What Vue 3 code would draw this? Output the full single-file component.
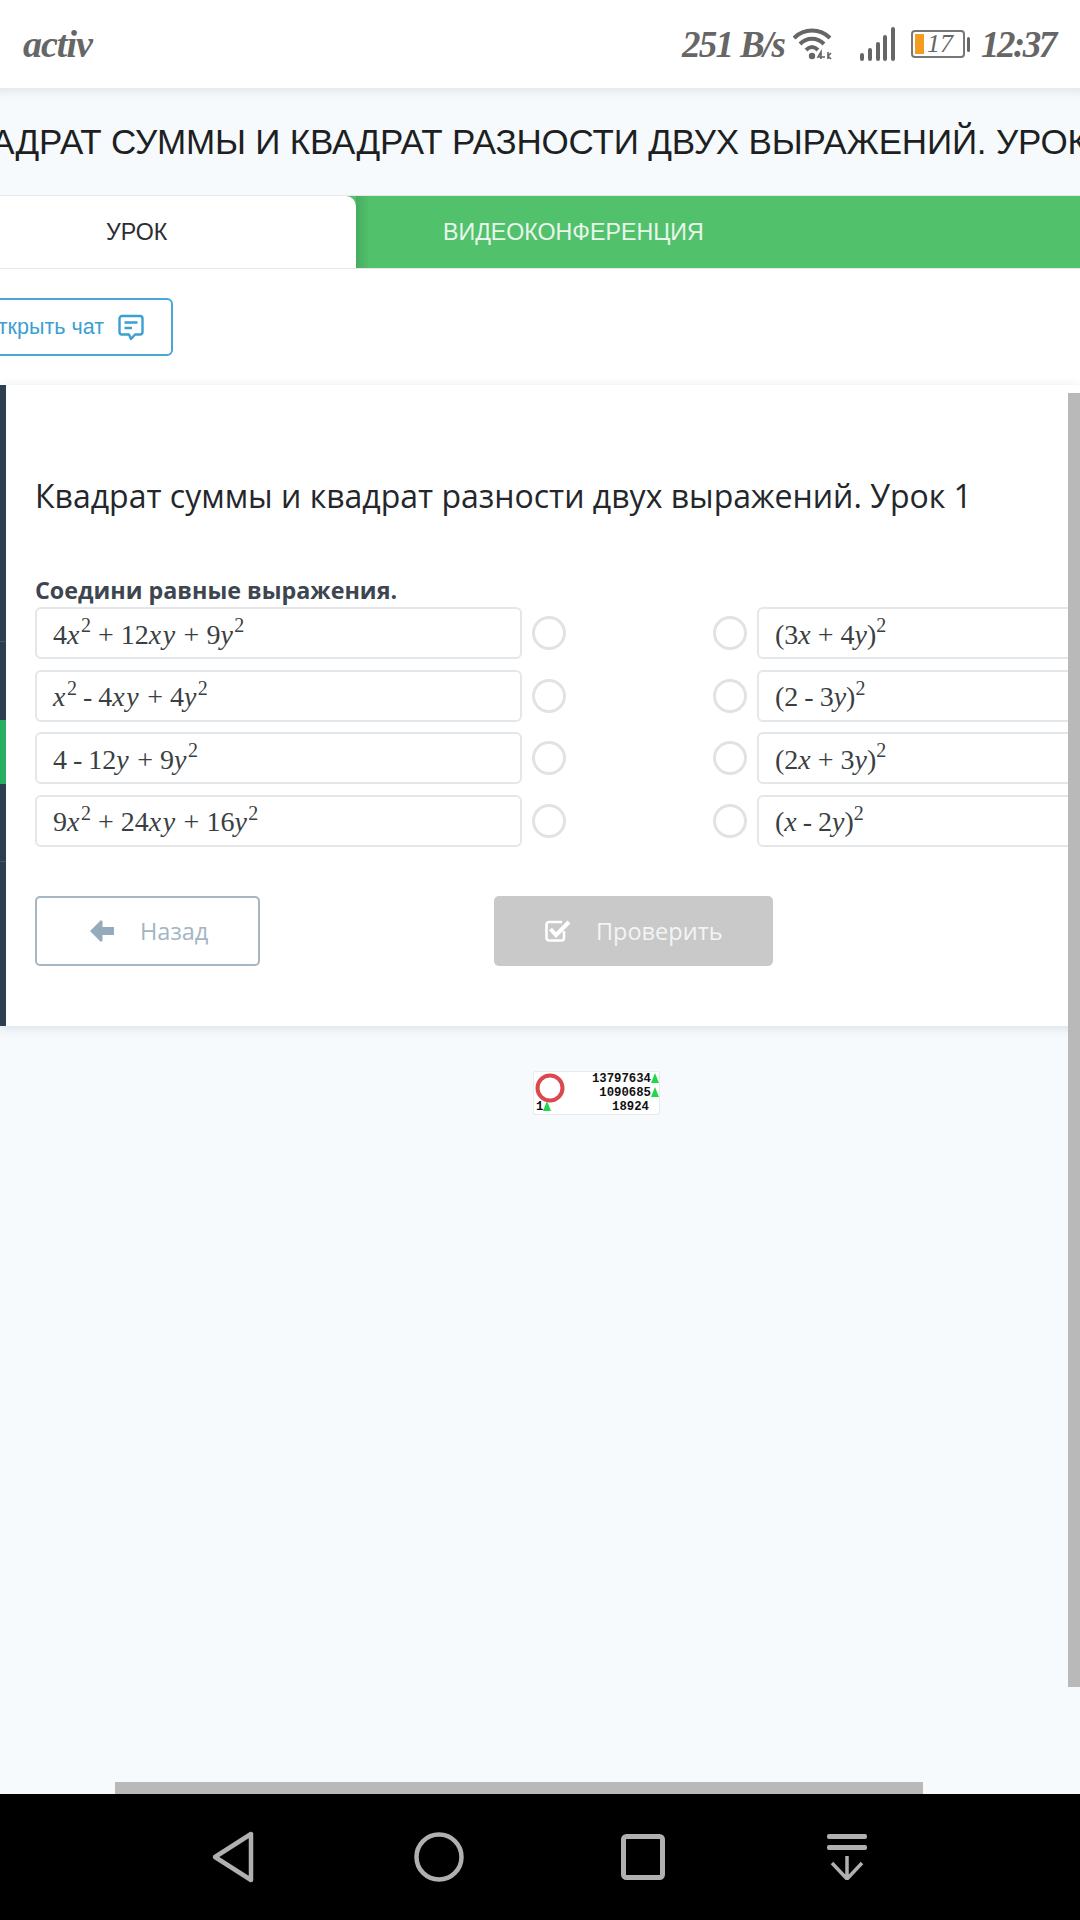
<script setup>
const leftRows = [
  [['n', '4'], ['i', 'x'], ['s', '2'], ['o', '+'], ['n', '12'], ['i', 'xy'], ['o', '+'], ['n', '9'], ['i', 'y'], ['s', '2']],
  [['i', 'x'], ['s', '2'], ['m', '-'], ['n', '4'], ['i', 'xy'], ['o', '+'], ['n', '4'], ['i', 'y'], ['s', '2']],
  [['n', '4'], ['m', '-'], ['n', '12'], ['i', 'y'], ['o', '+'], ['n', '9'], ['i', 'y'], ['s', '2']],
  [['n', '9'], ['i', 'x'], ['s', '2'], ['o', '+'], ['n', '24'], ['i', 'xy'], ['o', '+'], ['n', '16'], ['i', 'y'], ['s', '2']]
]
const rightRows = [
  [['n', '(3'], ['i', 'x'], ['o', '+'], ['n', '4'], ['i', 'y'], ['n', ')'], ['s', '2']],
  [['n', '(2'], ['m', '-'], ['n', '3'], ['i', 'y'], ['n', ')'], ['s', '2']],
  [['n', '(2'], ['i', 'x'], ['o', '+'], ['n', '3'], ['i', 'y'], ['n', ')'], ['s', '2']],
  [['n', '('], ['i', 'x'], ['m', '-'], ['n', '2'], ['i', 'y'], ['n', ')'], ['s', '2']]
]
const rows = leftRows.map((left, i) => ({ left, right: rightRows[i] }))
</script>

<template>
  <div class="screen">
    <header class="status">
      <span class="carrier">activ</span>
      <div class="status-right">
        <span class="speed">251 B/s</span>
        <svg class="wifi" width="40" height="34" viewBox="0 0 40 34">
          <path d="M1 11 C11 1 27 1 37 11" fill="none" stroke="#666" stroke-width="4"/>
          <path d="M7 17 C14 10 24 10 31 17" fill="none" stroke="#666" stroke-width="4"/>
          <path d="M13 23 C17 19 21 19 25 23" fill="none" stroke="#666" stroke-width="4"/>
          <circle cx="19" cy="29" r="3.2" fill="#666"/>
          <path d="M28 32 V25 L25 30 H32 M35 25 V32 M35 29 L38 26 M35 29 L38 32" fill="none" stroke="#666" stroke-width="1.6"/>
        </svg>
        <svg class="signal" width="35" height="34" viewBox="0 0 35 34">
          <rect x="0" y="26" width="4" height="8" rx="2" fill="#666"/>
          <rect x="8" y="21" width="4" height="13" rx="2" fill="#666"/>
          <rect x="16" y="15" width="4" height="19" rx="2" fill="#666"/>
          <rect x="23" y="8" width="4" height="26" rx="2" fill="#666"/>
          <rect x="31" y="0" width="4" height="34" rx="2" fill="#666"/>
        </svg>
        <div class="battery">
          <div class="battery-body">
            <span class="battery-fill"></span>
            <span class="battery-num">17</span>
          </div>
          <span class="battery-nub"></span>
        </div>
        <span class="clock">12:37</span>
      </div>
    </header>

    <main class="page">
      <div class="title-bar">
        <h1 class="course-title">КВАДРАТ СУММЫ И КВАДРАТ РАЗНОСТИ ДВУХ ВЫРАЖЕНИЙ. УРОК 1</h1>
      </div>

      <nav class="tabs">
        <div class="tab tab-active">УРОК</div>
        <div class="tab tab-video">ВИДЕОКОНФЕРЕНЦИЯ</div>
      </nav>

      <div class="chat-wrap">
        <button class="chat-btn">
          <span>Открыть чат</span>
          <svg width="26" height="27" viewBox="0 0 26 27">
            <path d="M4 2 H22 A2.5 2.5 0 0 1 24.5 4.500 V18 A2.500 2.500 0 0 1 22 20.500 H17 L13 25 L11 20.500 H4 A2.500 2.500 0 0 1 1.500 18 V4.500 A2.500 2.500 0 0 1 4 2 Z" fill="none" stroke="#3b9fd1" stroke-width="2.4" stroke-linejoin="round"/>
            <path d="M6.500 8.500 H19.500 M6.500 14 H14" stroke="#3b9fd1" stroke-width="2.400"/>
          </svg>
        </button>
      </div>

      <section class="card">
        <div class="strip">
          <span class="strip-seg seg-1"></span>
          <span class="strip-seg seg-2"></span>
          <span class="strip-seg seg-3"></span>
          <span class="strip-seg seg-4"></span>
        </div>
        <div class="card-body">
          <h2 class="lesson-title">Квадрат суммы и квадрат разности двух выражений. Урок 1</h2>
          <p class="task">Соедини равные выражения.</p>
          <div class="rows">
            <div v-for="(row, i) in rows" :key="i" class="row">
              <div class="expr expr-left">
                <span v-for="(t, k) in row.left" :key="k" :class="t[0]">{{ t[1] }}</span>
              </div>
              <span class="dot"></span>
              <span class="dot dot-right"></span>
              <div class="expr expr-right">
                <span v-for="(t, k) in row.right" :key="k" :class="t[0]">{{ t[1] }}</span>
              </div>
            </div>
          </div>
          <div class="actions">
            <button class="btn btn-back">
              <svg width="24" height="22" viewBox="0 0 24 22">
                <path d="M0 11 L11 0 L12.500 1.500 V7 H24 V15 H12.500 V20.500 L11 22 Z" fill="#93abbd"/>
              </svg>
              <span>Назад</span>
            </button>
            <button class="btn btn-check">
              <svg width="26" height="24" viewBox="0 0 26 24">
                <path d="M19 12 V19 A2.500 2.500 0 0 1 16.500 21.500 H4 A2.500 2.500 0 0 1 1.500 19 V5.500 A2.500 2.500 0 0 1 4 3 H17" fill="none" stroke="#fff" stroke-width="2.600"/>
                <path d="M5.500 10 L11 16 L24 3" fill="none" stroke="#fff" stroke-width="4"/>
              </svg>
              <span>Проверить</span>
            </button>
          </div>
        </div>
      </section>

      <div class="counter">
        <svg class="counter-ring" width="32" height="32" viewBox="0 0 32 32">
          <circle cx="16" cy="16" r="12.500" fill="none" stroke="#dc4850" stroke-width="4"/>
        </svg>
        <div class="counter-line line-1">13797634<i class="up"></i></div>
        <div class="counter-line line-2">1090685<i class="up"></i></div>
        <div class="counter-line line-3">18924</div>
        <div class="counter-one">1<i class="up"></i></div>
      </div>

      <span class="scroll-v"></span>
      <span class="scroll-h"></span>
    </main>

    <footer class="navbar">
      <svg width="46" height="54" viewBox="0 0 46 54">
        <path d="M40 4 V50 L4 27 Z" fill="none" stroke="#b0b0b0" stroke-width="4.500" stroke-linejoin="round"/>
      </svg>
      <svg width="50" height="52" viewBox="0 0 50 52">
        <circle cx="25" cy="26" r="22.500" fill="none" stroke="#b0b0b0" stroke-width="4.500"/>
      </svg>
      <svg width="44" height="46" viewBox="0 0 44 46">
        <rect x="2.500" y="2.500" width="39" height="41" rx="3" fill="none" stroke="#b0b0b0" stroke-width="5"/>
      </svg>
      <svg class="nav-menu" width="40" height="46" viewBox="0 0 40 46">
        <rect x="0" y="0" width="40" height="5" rx="2" fill="#b0b0b0"/>
        <rect x="0" y="11" width="40" height="5" rx="2" fill="#b0b0b0"/>
        <path d="M20 22 V44 M5 29 L20 45 L35 29" fill="none" stroke="#b0b0b0" stroke-width="3.500"/>
      </svg>
    </footer>
  </div>
</template>

<style>
html, body {
  margin: 0;
  background: #000;
}
</style>

<style scoped>
.screen {
  width: 1080px;
  height: 1920px;
  display: flex;
  flex-direction: column;
  overflow: hidden;
  background: #f6fafd;
  font-family: "Open Sans", "Noto Sans", sans-serif;
}

.status {
  height: 88px;
  flex: none;
  display: flex;
  align-items: center;
  justify-content: space-between;
  padding: 0 24px 0 23px;
  background: #fff;
  color: #666;
  font-family: "Liberation Serif", serif;
  font-style: italic;
  font-weight: 700;
  position: relative;
  z-index: 2;
}

.carrier {
  font-size: 38px;
  letter-spacing: -1px;
}

.status-right {
  display: flex;
  align-items: center;
}

.speed {
  font-size: 37px;
  width: 111px;
  letter-spacing: -1.7px;
  white-space: nowrap;
}

.wifi {
  margin-right: 27px;
}

.signal {
  margin-right: 16px;
}

.battery {
  display: flex;
  align-items: center;
  gap: 2px;
  margin-right: 11px;
}

.battery-body {
  width: 54px;
  height: 28px;
  box-sizing: border-box;
  border: 2px solid #777;
  border-radius: 4px;
  display: flex;
  align-items: center;
  padding-left: 2px;
}

.battery-fill {
  width: 9px;
  height: 20px;
  background: #f39c1f;
}

.battery-num {
  font-size: 26px;
  font-weight: 400;
  margin-left: 3px;
}

.battery-nub {
  width: 3px;
  height: 15px;
  border-radius: 2px;
  background: #666;
}

.clock {
  font-size: 37px;
  width: 75px;
  letter-spacing: -2.500px;
  white-space: nowrap;
}

.page {
  flex: 1;
  min-height: 0;
  position: relative;
  display: flex;
  flex-direction: column;
  box-shadow: inset 0 12px 10px -8px #e4e7ea;
}

.title-bar {
  height: 107px;
  flex: none;
  display: flex;
  align-items: center;
  overflow: hidden;
}

.course-title {
  margin: 0 0 0 -51px;
  font-family: "Liberation Sans", sans-serif;
  font-size: 35px;
  font-weight: 400;
  letter-spacing: -0.18px;
  color: #1d1f22;
  white-space: nowrap;
}

.tabs {
  height: 74px;
  flex: none;
  display: flex;
  box-sizing: border-box;
  background: #52c16c;
  border-top: 1px solid #e6e8ea;
  border-bottom: 1px solid #e6e8ea;
  font-family: "Liberation Sans", sans-serif;
  font-size: 23.200px;
}

.tab {
  display: flex;
  align-items: center;
}

.tab-active {
  width: 356px;
  flex: none;
  box-sizing: border-box;
  padding-left: 106px;
  background: #fff;
  border-radius: 0 10px 0 0;
  color: #2b2e31;
}

.tab-video {
  flex: 1;
  padding-left: 87px;
  background: linear-gradient(90deg, #46ad60, #52c16c 14px);
  color: #e8f6eb;
}

.chat-wrap {
  height: 116px;
  flex: none;
  box-sizing: border-box;
  padding-top: 29px;
  background: #fff;
  overflow: hidden;
}

.chat-btn {
  width: 213px;
  height: 58px;
  margin-left: -40px;
  display: flex;
  align-items: center;
  justify-content: flex-end;
  gap: 14px;
  padding: 0 27px 0 0;
  box-sizing: border-box;
  background: #fff;
  border: 2px solid #4aa6d8;
  border-radius: 6px;
  color: #3b9fd1;
  font-family: "Liberation Sans", sans-serif;
  font-size: 21.500px;
  white-space: nowrap;
}

.card {
  height: 641px;
  flex: none;
  display: flex;
  background: #fff;
  box-shadow: 0 2px 10px rgba(70, 90, 100, 0.16);
}

.strip {
  width: 6px;
  flex: none;
  display: flex;
  flex-direction: column;
  background: #2c3e50;
}

.strip-seg {
  display: block;
  flex: none;
  box-sizing: border-box;
  border-bottom: 1px solid #47586a;
}

.seg-1 {
  height: 257px;
}

.seg-2 {
  height: 78px;
  border-bottom: 0;
}

.seg-3 {
  height: 64px;
  background: #27ae60;
  border-bottom: 0;
}

.seg-4 {
  height: 78px;
}

.card-body {
  flex: 1;
  min-width: 0;
  padding: 0 0 0 29px;
}

.lesson-title {
  margin: 88px 0 0;
  font-size: 32px;
  font-weight: 400;
  line-height: 46px;
  color: #23272b;
  white-space: nowrap;
}

.task {
  margin: 54px 0 0;
  font-size: 23.300px;
  font-weight: 700;
  line-height: 34px;
  color: #3d4650;
  white-space: nowrap;
}

.rows {
  margin-top: 0;
  display: flex;
  flex-direction: column;
  gap: 10.670px;
}

.row {
  height: 52px;
  display: flex;
  align-items: center;
}

.expr {
  height: 52px;
  box-sizing: border-box;
  display: flex;
  align-items: center;
  border: 2px solid #e4e7e9;
  border-radius: 6px;
  padding: 3px 0 0 16px;
  background: #fff;
  color: #3a3f44;
  font-family: "Liberation Serif", serif;
  font-size: 28px;
  white-space: pre;
}

.expr-left {
  width: 487px;
  flex: none;
}

.expr-left .i {
  letter-spacing: 1.500px;
}

.expr-right {
  width: 400px;
  flex: none;
  margin-left: 10px;
  border-radius: 6px 0 0 6px;
}

.dot {
  width: 34px;
  height: 34px;
  flex: none;
  box-sizing: border-box;
  margin-left: 10px;
  border: 3px solid #e0e3e4;
  border-radius: 50%;
}

.dot-right {
  margin-left: 147px;
}

.i {
  font-style: italic;
}

.s {
  font-size: 20px;
  align-self: flex-start;
  margin-top: 2px;
}

.o {
  margin: 0 7px;
}

.m {
  margin: 0 6px;
}

.actions {
  margin-top: 49px;
  display: flex;
  align-items: flex-start;
}

.btn {
  height: 70px;
  display: flex;
  align-items: center;
  box-sizing: border-box;
  font-family: "Open Sans", sans-serif;
  font-size: 23.500px;
  border-radius: 5px;
}

.btn-back {
  width: 225px;
  gap: 26px;
  padding: 0 0 0 53px;
  background: #fff;
  border: 2px solid #a6b6c3;
  color: #a2b5c3;
}

.btn-check {
  width: 279px;
  margin-left: 234px;
  gap: 25px;
  padding: 0 0 0 51px;
  background: #c9c9c9;
  border: 0;
  color: #f4f4f4;
}

.counter {
  position: relative;
  width: 127px;
  height: 44px;
  margin: 45px 0 0 533px;
  box-sizing: border-box;
  background: #fff;
  border: 1px solid #e8eaec;
  border-radius: 2px;
  font-family: "Liberation Mono", monospace;
  font-size: 12.300px;
  font-weight: 700;
  line-height: 15px;
  color: #111;
  flex: none;
}

.counter-ring {
  position: absolute;
  left: 0;
  top: 0;
}

.counter-line {
  position: absolute;
  right: 0;
  white-space: nowrap;
}

.line-1 {
  top: 0;
}

.line-2 {
  top: 14px;
}

.line-3 {
  top: 28px;
  right: 10px;
}

.counter-one {
  position: absolute;
  left: 2px;
  top: 28px;
}

.up {
  display: inline-block;
  width: 0;
  height: 0;
  border-left: 4px solid transparent;
  border-right: 4px solid transparent;
  border-bottom: 10px solid #22d84a;
  vertical-align: -1px;
}

.scroll-v {
  position: absolute;
  right: 0;
  top: 305px;
  width: 12px;
  height: 1294px;
  background: #b9b9b9;
}

.scroll-h {
  position: absolute;
  left: 115px;
  bottom: 0;
  width: 808px;
  height: 12px;
  background: #b9b9b9;
}

.navbar {
  height: 126px;
  flex: none;
  box-sizing: border-box;
  display: flex;
  align-items: center;
  padding-left: 211px;
  gap: 157px;
  background: #000;
}

.nav-menu {
  margin-left: 5px;
}
</style>
